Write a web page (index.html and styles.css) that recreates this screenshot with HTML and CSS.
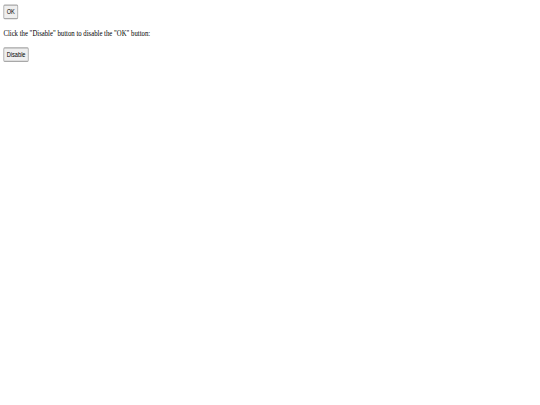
FILE: index.html
```html
<!DOCTYPE html>
<html>
<head>
<meta charset="utf-8">
<link rel="stylesheet" href="styles.css">
</head>
<body>
<div class="frame">
<div class="stage">
<button class="btn" id="ok">OK</button>
<p class="msg">Click the "Disable" button to disable the "OK" button:</p>
<button class="btn">Disable</button>
</div>
</div>
</body>
</html>
```

FILE: styles.css
```css
html, body {
  margin: 0;
  padding: 0;
  background: #ffffff;
}
.frame {
  width: 540px;
  height: 405px;
  overflow: hidden;
}
.stage {
  width: 1256px;
  padding: 8px;
  font-family: "Liberation Serif", "Times New Roman", serif;
  font-size: 16px;
  line-height: 18px;
  transform-origin: 0 0;
  transform: scale(0.421875, 0.5625);
}
.msg {
  margin: 16px 0;
  color: #000;
}
.btn {
  font-family: "Liberation Sans", Arial, sans-serif;
  font-size: 13.333px;
  line-height: 16px;
  padding: 3px 6px;
  border: 2px solid #a8a8a8;
  border-radius: 3px;
  background: #efefef;
  color: #000;
}
```
